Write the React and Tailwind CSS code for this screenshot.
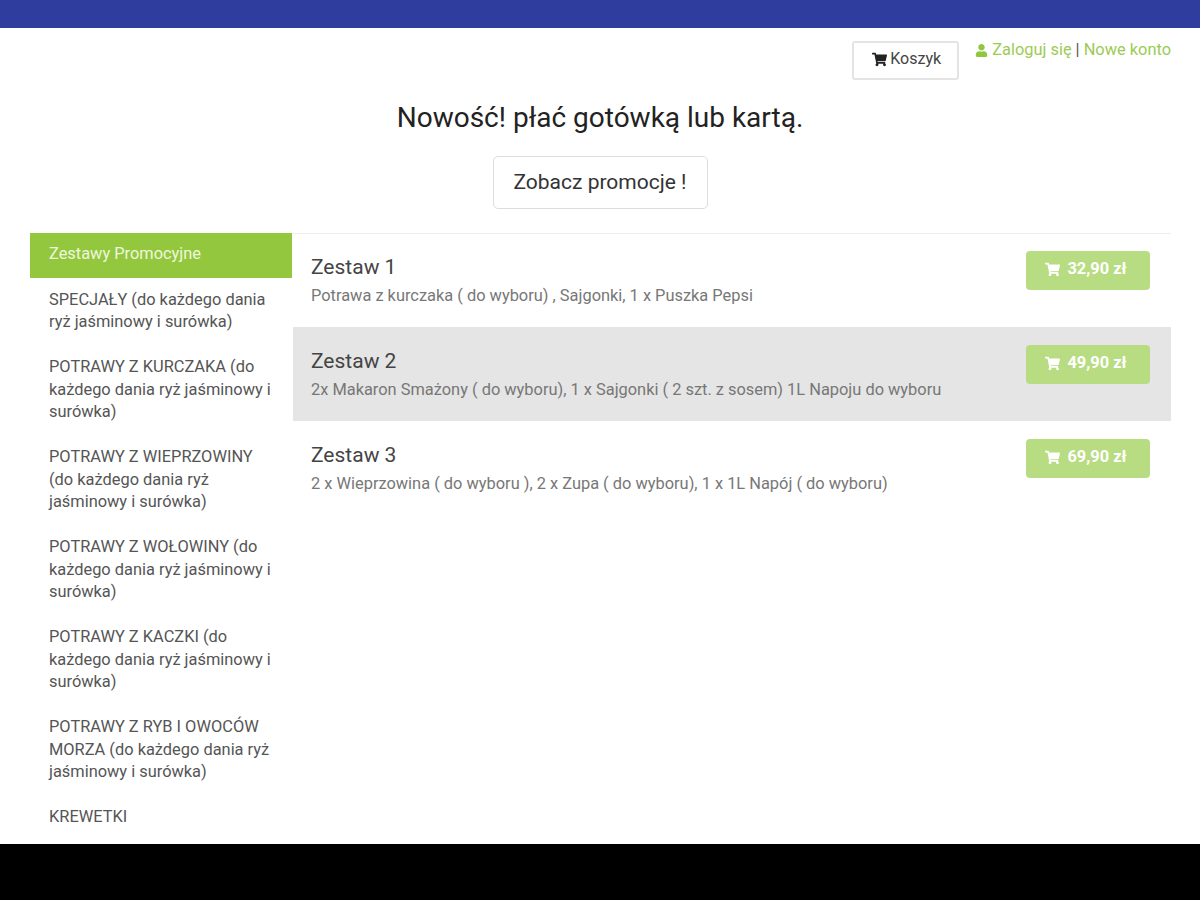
import { FaShoppingCart, FaUser } from "react-icons/fa";

const categories = [
  "SPECJAŁY (do każdego dania ryż jaśminowy i surówka)",
  "POTRAWY Z KURCZAKA (do każdego dania ryż jaśminowy i surówka)",
  "POTRAWY Z WIEPRZOWINY (do każdego dania ryż jaśminowy i surówka)",
  "POTRAWY Z WOŁOWINY (do każdego dania ryż jaśminowy i surówka)",
  "POTRAWY Z KACZKI (do każdego dania ryż jaśminowy i surówka)",
  "POTRAWY Z RYB I OWOCÓW MORZA (do każdego dania ryż jaśminowy i surówka)",
  "KREWETKI",
];

const sets = [
  { name: "Zestaw 1", desc: "Potrawa z kurczaka ( do wyboru) , Sajgonki, 1 x Puszka Pepsi", price: "32,90 zł" },
  { name: "Zestaw 2", desc: "2x Makaron Smażony ( do wyboru), 1 x Sajgonki ( 2 szt. z sosem) 1L Napoju do wyboru", price: "49,90 zł", active: true },
  { name: "Zestaw 3", desc: "2 x Wieprzowina ( do wyboru ), 2 x Zupa ( do wyboru), 1 x 1L Napój ( do wyboru)", price: "69,90 zł" },
];

export default function App() {
  return (
    <div className="h-[900px] flex flex-col overflow-hidden bg-white font-['Roboto',sans-serif] text-[#333]">
      <div className="h-[28px] shrink-0 bg-[#2f3e9e]" />

      <div className="flex-1 min-h-0 overflow-hidden px-[29px]">
        {/* top links */}
        <div className="flex justify-end items-start pt-[13px]">
          <button className="w-[107px] h-[39px] mr-[16px] flex items-center justify-center gap-[3px] pb-[3px] pl-[2px] bg-white border-2 border-[#e4e4e4] rounded-[3px] text-[16px] text-[#444]">
            <FaShoppingCart className="text-[15px] text-[#222]" />
            Koszyk
          </button>
          <div className="flex items-center -mt-[1px] text-[16.4px] leading-[20px] text-[#9ccb55]">
            <FaUser className="text-[13px] mr-[4px] text-[#8fc73e]" />
            <span>Zaloguj się</span>
            <span className="text-[#555] mx-[4px]">|</span>
            <span>Nowe konto</span>
          </div>
        </div>

        <h2 className="mt-[20px] text-center text-[28px] leading-[36px] font-normal text-[#222]">
          Nowość! płać gotówką lub kartą.
        </h2>
        <div className="mt-[20px] flex justify-center">
          <button className="w-[215px] h-[53px] bg-white border border-[#ddd] rounded-[5px] text-[21px] text-[#333]">
            Zobacz promocje !
          </button>
        </div>

        <div className="mt-[24px] flex">
          <ul className="w-[263px] ml-[1px] shrink-0">
            <li className="w-[262px] h-[45px] flex items-center px-[19px] pb-[2px] bg-[#93c83e] text-[#eef6de] text-[16.4px]">
              Zestawy Promocyjne
            </li>
            {categories.map((c) => (
              <li key={c} className="pl-[19px] pr-[19px] pt-[10.5px] pb-[12px] text-[16.4px] leading-[22.5px] text-[#555]">
                {c}
              </li>
            ))}
          </ul>
          <div className="flex-1 shadow-[inset_0_1px_0_#eee]">
            {sets.map((s) => (
              <div key={s.name} className={`h-[94px] flex justify-between pl-[18px] pr-[21px] pt-[18px] ${s.active ? "bg-[#e5e5e5]" : ""}`}>
                <div>
                  <div className="text-[21px] leading-[33px] text-[#444]">{s.name}</div>
                  <div className="text-[16.4px] leading-[24px] text-[#777]">{s.desc}</div>
                </div>
                <button className="w-[124px] h-[39px] flex items-center justify-center gap-[7px] pb-[2px] pr-[4px] bg-[#b8dc82] rounded-[4px] text-white text-[16.4px] font-bold">
                  <FaShoppingCart className="text-[15px]" />
                  {s.price}
                </button>
              </div>
            ))}
          </div>
        </div>
      </div>

      <div className="h-[56px] shrink-0 bg-black" />
    </div>
  );
}
